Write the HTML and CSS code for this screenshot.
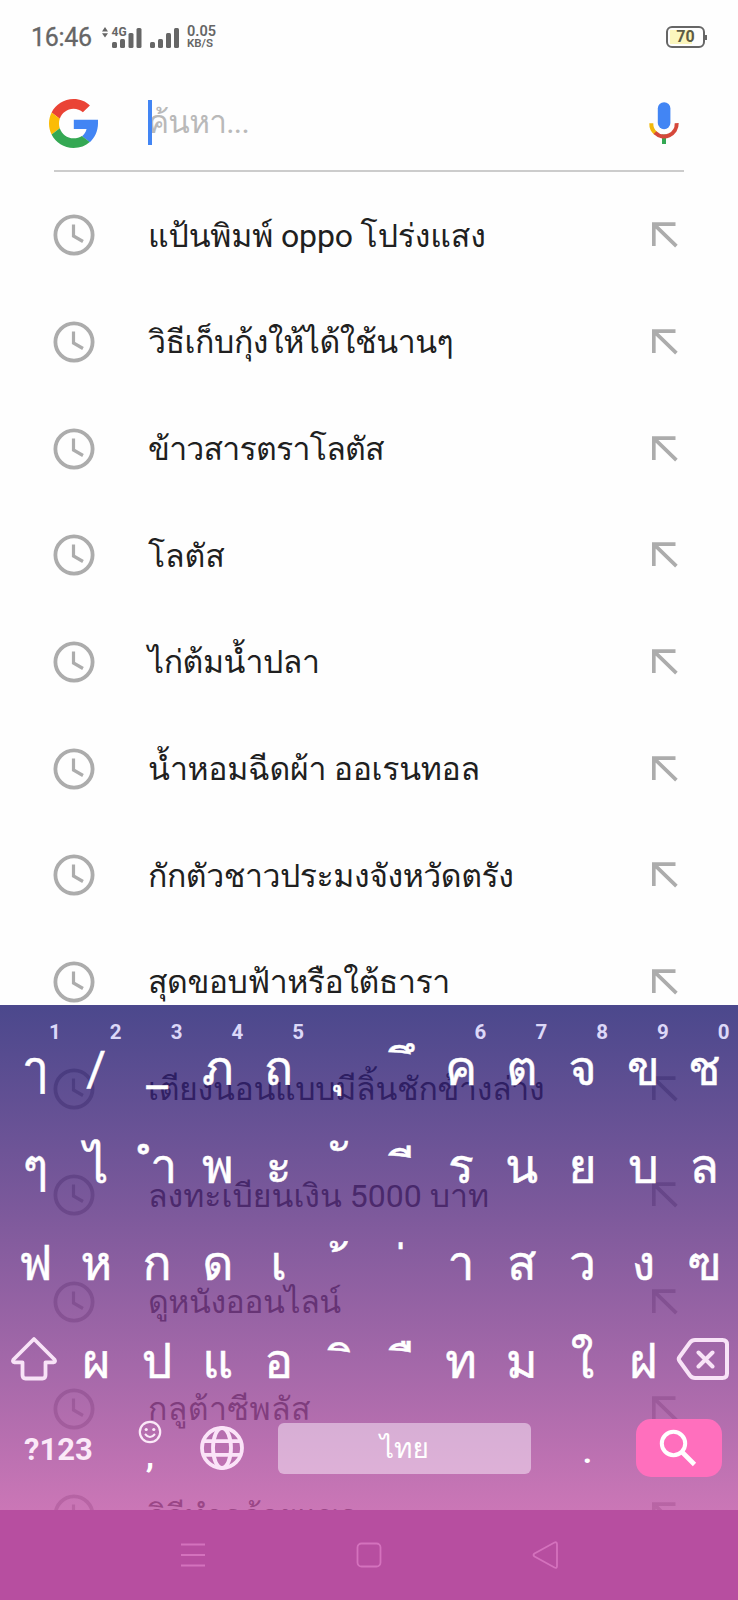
FILE: index.html
```html
<!DOCTYPE html>
<html lang="th">
<head>
<meta charset="utf-8">
<title>ค้นหา</title>
<link rel="stylesheet" href="styles.css">
</head>
<body>
<svg width="0" height="0" class="defs">
  <symbol id="clock" viewBox="0 0 42 42"><circle cx="21" cy="21" r="18.6" fill="none" stroke="currentColor" stroke-width="3.8"/><path d="M20.5 10.5V22L30 27.5" fill="none" stroke="currentColor" stroke-width="3.2"/></symbol>
  <symbol id="arrow" viewBox="0 0 26 26"><path d="M1.8 24V2.2H23.5M2 2.4L24.4 24.2" fill="none" stroke="currentColor" stroke-width="3.7"/></symbol>
</svg>
<div class="phone">
  <header class="status">
    <span class="time">16:46</span>
    <svg class="signal" width="82" height="24" viewBox="0 0 82 24">
      <g fill="#666"><path d="M0 5.500L3 1L6 5.500zM0 7.200H6L3 11.500z"/>
      <rect x="10" y="16" width="5" height="6" rx="1.5"/><rect x="18" y="13" width="5" height="9" rx="1.5"/><rect x="26.500" y="7" width="5" height="15" rx="1.5"/><rect x="34.500" y="2" width="5" height="20" rx="1.500"/>
      <rect x="48" y="16" width="5" height="6" rx="1.5"/><rect x="56" y="13" width="5" height="9" rx="1.5"/><rect x="64" y="7" width="5" height="15" rx="1.5"/><rect x="72" y="2" width="5" height="20" rx="1.5"/></g>
      <text x="9.500" y="9.800" class="net">4G</text>
    </svg>
    <span class="speed"><b>0.05</b><b class="unit">KB/S</b></span>
    <span class="battery"><span>70</span></span>
  </header>
  <div class="search">
    <svg class="glogo" width="49" height="49" viewBox="0 0 48 48"><path fill="#EA4335" d="M24 9.500c3.540 0 6.710 1.220 9.210 3.600l6.850-6.850C35.900 2.380 30.470 0 24 0 14.620 0 6.510 5.380 2.560 13.220l7.980 6.190C12.430 13.720 17.740 9.500 24 9.500z"/><path fill="#4285F4" d="M48 20.300H24.300v9.200h12.500c-.7 3-2.200 5.300-4.500 6.900l7.730 6C44.600 38.200 48 31.500 48 24z"/><path fill="#FBBC05" d="M10.530 28.590c-.48-1.450-.76-2.990-.76-4.590s.27-3.140.76-4.590l-7.980-6.190C.92 16.460 0 20.120 0 24c0 3.880.92 7.540 2.560 10.780l7.970-6.190z"/><path fill="#34A853" d="M24 48c6.480 0 11.930-2.130 15.890-5.810l-7.730-6c-2.150 1.450-4.920 2.300-8.160 2.300-6.260 0-11.570-4.220-13.470-9.910l-7.980 6.190C6.510 42.620 14.620 48 24 48z"/></svg>
    <span class="field"><i class="caret"></i>ค้นหา...</span>
    <svg class="mic" width="30" height="44" viewBox="0 0 30 44"><path d="M15 33.500V43" stroke="#34A853" stroke-width="4"/><path d="M2.300 22.200A12.700 12.700 0 0 0 6.600 32.200" fill="none" stroke="#F2B90C" stroke-width="4"/><path d="M6 31.700A12.700 12.700 0 0 0 27.700 22.200" fill="none" stroke="#D5483B" stroke-width="4"/><rect x="8.800" y="1.200" width="12.600" height="27" rx="6.300" fill="#4285F4"/></svg>
  </div>
  <ul class="list">
    <li><svg class="clock"><use href="#clock"/></svg><span class="t1">แป้นพิมพ์ oppo โปร่งแสง</span><svg class="arrow"><use href="#arrow"/></svg></li>
    <li><svg class="clock"><use href="#clock"/></svg><span class="t4">วิธีเก็บกุ้งให้ได้ใช้นานๆ</span><svg class="arrow"><use href="#arrow"/></svg></li>
    <li><svg class="clock"><use href="#clock"/></svg><span class="t6">ข้าวสารตราโลตัส</span><svg class="arrow"><use href="#arrow"/></svg></li>
    <li><svg class="clock"><use href="#clock"/></svg><span class="t1">โลตัส</span><svg class="arrow"><use href="#arrow"/></svg></li>
    <li><svg class="clock"><use href="#clock"/></svg><span class="t4">ไก่ต้มน้ำปลา</span><svg class="arrow"><use href="#arrow"/></svg></li>
    <li><svg class="clock"><use href="#clock"/></svg><span class="t3">น้ำหอมฉีดผ้า ออเรนทอล</span><svg class="arrow"><use href="#arrow"/></svg></li>
    <li><svg class="clock"><use href="#clock"/></svg><span class="t4">กักตัวชาวประมงจังหวัดตรัง</span><svg class="arrow"><use href="#arrow"/></svg></li>
    <li><svg class="clock"><use href="#clock"/></svg><span class="t4">สุดขอบฟ้าหรือใต้ธารา</span><svg class="arrow"><use href="#arrow"/></svg></li>
    <li><svg class="clock"><use href="#clock"/></svg><span class="t3">เตียงนอนแบบมีลิ้นชักข้างล่าง</span><svg class="arrow"><use href="#arrow"/></svg></li>
    <li><svg class="clock"><use href="#clock"/></svg><span>ลงทะเบียนเงิน 5000 บาท</span><svg class="arrow"><use href="#arrow"/></svg></li>
    <li><svg class="clock"><use href="#clock"/></svg><span class="t4">ดูหนังออนไลน์</span><svg class="arrow"><use href="#arrow"/></svg></li>
    <li><svg class="clock"><use href="#clock"/></svg><span class="wide">กลูต้าซีพลัส</span><svg class="arrow"><use href="#arrow"/></svg></li>
    <li><svg class="clock"><use href="#clock"/></svg><span class="t4">วิธีทำกล้วยแขก</span><svg class="arrow"><use href="#arrow"/></svg></li>
  </ul>
  <div class="keyboard">
    <div class="keys">
      <div class="key"><sup>1</sup>ๅ</div><div class="key"><sup>2</sup>/</div><div class="key"><sup>3</sup>_</div><div class="key"><sup>4</sup>ภ</div><div class="key"><sup>5</sup>ถ</div><div class="key below">&nbsp;ุ</div><div class="key vowel high">&nbsp;ึ</div><div class="key"><sup>6</sup>ค</div><div class="key"><sup>7</sup>ต</div><div class="key"><sup>8</sup>จ</div><div class="key"><sup>9</sup>ข</div><div class="key"><sup>0</sup>ช</div>
      <div class="key">ๆ</div><div class="key">ไ</div><div class="key">&nbsp;ำ</div><div class="key">พ</div><div class="key">ะ</div><div class="key hanakat">&nbsp;ั</div><div class="key vowel">&nbsp;ี</div><div class="key">ร</div><div class="key">น</div><div class="key">ย</div><div class="key">บ</div><div class="key">ล</div>
      <div class="key">ฟ</div><div class="key">ห</div><div class="key">ก</div><div class="key">ด</div><div class="key">เ</div><div class="key tone">&nbsp;้</div><div class="key tone">&nbsp;่</div><div class="key">า</div><div class="key">ส</div><div class="key">ว</div><div class="key">ง</div><div class="key">ฃ</div>
      <div class="key icon"><svg width="48" height="46" viewBox="0 0 48 46"><path d="M24 3L3.500 23.500Q2 26 4.500 26.300H12.500V39Q12.500 42.500 15.500 42.500H32.500Q35.500 42.500 35.500 39V26.300H43.500Q46 26 44.500 23.500Z" fill="none" stroke="#f8e3f7" stroke-width="3.800" stroke-linejoin="round"/></svg></div><div class="key">ผ</div><div class="key">ป</div><div class="key">แ</div><div class="key">อ</div><div class="key vowel">&nbsp;ิ</div><div class="key vowel">&nbsp;ื</div><div class="key">ท</div><div class="key">ม</div><div class="key">ใ</div><div class="key">ฝ</div><div class="key icon"><svg width="54" height="44" viewBox="0 0 54 44"><path d="M19 3H46.500Q51 3 51 7.500V36.500Q51 41 46.500 41H19Q16 41 14 38.500L3.500 24Q2 22 3.500 20L14 5.500Q16 3 19 3ZM22.500 15.500L36.500 29.500M36.500 15.500L22.500 29.500" fill="none" stroke="#f8e3f7" stroke-width="4" stroke-linecap="round" stroke-linejoin="round"/></svg></div>
    </div>
    <div class="bottom">
      <span class="sym">?123</span>
      <span class="comma"><svg width="24" height="24" viewBox="0 0 24 24"><circle cx="12" cy="12" r="10.200" fill="none" stroke="#fbe9f8" stroke-width="2.200"/><circle cx="8.200" cy="9.500" r="1.600" fill="#fbe9f8"/><circle cx="15.800" cy="9.500" r="1.600" fill="#fbe9f8"/><path d="M7 14Q12 20 17 14" fill="none" stroke="#fbe9f8" stroke-width="2"/></svg><b>,</b></span>
      <svg class="globe" width="46" height="46" viewBox="0 0 46 46"><g fill="none" stroke="#fbe3f8" stroke-width="3.800"><circle cx="23" cy="23" r="20"/><ellipse cx="23" cy="23" rx="9" ry="20"/><path d="M5 16.200H41M5 29.800H41"/></g></svg>
      <span class="space">ไทย</span>
      <span class="dot">.</span>
      <span class="go"><svg width="38" height="38" viewBox="0 0 38 38"><circle cx="14.500" cy="14.500" r="11.700" fill="none" stroke="#fff" stroke-width="4"/><path d="M22.500 22.500L35.500 35.500" stroke="#fff" stroke-width="4.600"/></svg></span>
    </div>
  </div>
  <nav class="nav">
    <svg width="26" height="26" viewBox="0 0 26 26"><path d="M1 2.500H25M1 13H25M1 23.500H25"/></svg>
    <svg width="26" height="26" viewBox="0 0 26 26"><rect x="1.500" y="1.500" width="23" height="23" rx="4"/></svg>
    <svg width="26" height="28" viewBox="0 0 26 28"><path d="M22.500 1.500Q25 .5 25 3.500V25Q25 27.500 22.500 26.500L2.500 15.500Q.5 14 2.500 12.500Z"/></svg>
  </nav>
</div>
</body>
</html>
```
FILE: styles.css
```css
* { box-sizing: border-box; }
body { margin: 0; background: #fff; font-family: Roboto, Loma, "Noto Sans", sans-serif; }
.defs { display: block; position: absolute; }
.phone { position: relative; width: 738px; height: 1600px; overflow: hidden; background: #fefefe; }
.status { display: flex; align-items: center; height: 74px; padding: 0 31px 0 31px; color: #666; }
.time { width: 71px; font-size: 25px; line-height: 30px; padding-top: 2px; letter-spacing: -.3px; -webkit-text-stroke: .3px #666; }
.signal { flex: none; margin-top: 2px; }
.net { font: bold 12px Roboto, sans-serif; fill: #666; stroke: #fefefe; stroke-width: 2px; paint-order: stroke; }
.speed { display: flex; flex-direction: column; margin-left: 3px; font-size: 14.500px; line-height: 12px; padding-top: 1px; }
.speed .unit { font-size: 11.500px; line-height: 11px; }
.speed b { font-weight: 600; }
.battery { position: relative; margin-left: auto; margin-right: 2px; width: 39px; height: 22px; border: 2px solid #666; border-radius: 6px; padding: 2px; font: bold 16px/14px Roboto, sans-serif; color: #5c5c45; text-align: center; }
.battery span { display: block; background: linear-gradient(90deg, #fbf6bd 70%, #fefefe 70%); }
.battery::after { content: ""; position: absolute; right: -4px; top: 7px; width: 2px; height: 5px; background: #666; }
.search { display: flex; align-items: center; height: 98px; margin: 0 54px; padding-top: 2px; border-bottom: 2px solid #ccc; }
.glogo { margin-left: -5px; flex: none; }
.field { position: relative; margin-left: 50px; font-size: 31.500px; line-height: 50px; letter-spacing: -.7px; color: #b9b9b9; }
.caret { position: absolute; left: 0; top: 2px; width: 4px; height: 45px; background: #4285f4; }
.mic { margin-left: auto; margin-right: 5px; }
.list { list-style: none; margin: 10px 0 0; padding: 0; }
.list li { display: flex; align-items: center; height: 106.670px; padding: 0 60.500px 0 53px; color: #202020; font-size: 32px; line-height: 50px; white-space: nowrap; }
.clock { width: 42px; height: 42px; color: #acacac; flex: none; }
.list span { margin-left: 53px; padding-top: 1px; }
.list .t1 { letter-spacing: -.15px; }
.list .t3 { letter-spacing: -.3px; }
.list .t4 { letter-spacing: -.45px; }
.list .t6 { letter-spacing: -.75px; }
.list .wide { letter-spacing: .4px; }
.arrow { width: 26px; height: 26px; color: #acacac; margin-left: auto; }
.keyboard { position: absolute; left: 0; top: 1005px; width: 738px; height: 505px; background: linear-gradient(180deg, rgba(27,23,110,.79) 0%, rgba(90,45,129,.79) 41%, rgba(151,68,150,.79) 78%, rgba(189,82,163,.79) 100%); color: #fff; }
.keys { display: grid; grid-template-columns: repeat(12, 60.800px); grid-auto-rows: 97.500px; padding-left: 5px; height: 390px; }
.key { position: relative; display: flex; justify-content: center; font-size: 48px; line-height: 70px; padding-top: 29px; white-space: pre; -webkit-text-stroke: .5px #fff; }
.key sup { position: absolute; right: 5px; top: 15px; font: bold 20.500px/24px Roboto, sans-serif; color: #dcd8f8; -webkit-text-stroke: 0; }
.key.icon { align-items: center; padding-top: 26px; padding-right: 2px; }
.key.below { padding-top: 27px; padding-right: 3px; }
.key.vowel { padding-top: 32px; padding-left: 16px; }
.key.vowel.high { padding-top: 27px; }
.key.hanakat { padding-top: 25px; padding-left: 4px; }
.key.tone { padding-top: 41px; }
.bottom { display: flex; height: 115px; padding-left: 24px; align-items: flex-start; }
.sym { width: 114px; padding-top: 37px; font: bold 31px/36px Roboto, sans-serif; color: #fbe9f8; }
.comma { display: flex; flex-direction: column; align-items: center; width: 24px; padding-top: 25px; }
.comma b { font-size: 34px; line-height: 28px; margin-top: -3px; }
.globe { margin: 30px 0 0 37px; }
.space { margin: 28px 0 0 33px; width: 253px; height: 51px; border-radius: 6px; background: rgba(245,230,245,.54); text-align: center; font-size: 28px; line-height: 51px; }
.dot { width: 113px; font: bold 32px/40px Roboto, sans-serif; text-align: center; padding-top: 37px; margin-right: -8px; }
.go { display: flex; align-items: center; justify-content: center; width: 86px; height: 58px; margin-top: 24px; border-radius: 15px; background: #ff6fbd; padding-right: 2px; }
.nav { position: absolute; left: 0; top: 1510px; width: 738px; height: 90px; display: flex; align-items: center; justify-content: center; gap: 150px; background: #b74ea0; }
.nav svg { fill: none; stroke: #d472bd; stroke-width: 1.800; }
```
